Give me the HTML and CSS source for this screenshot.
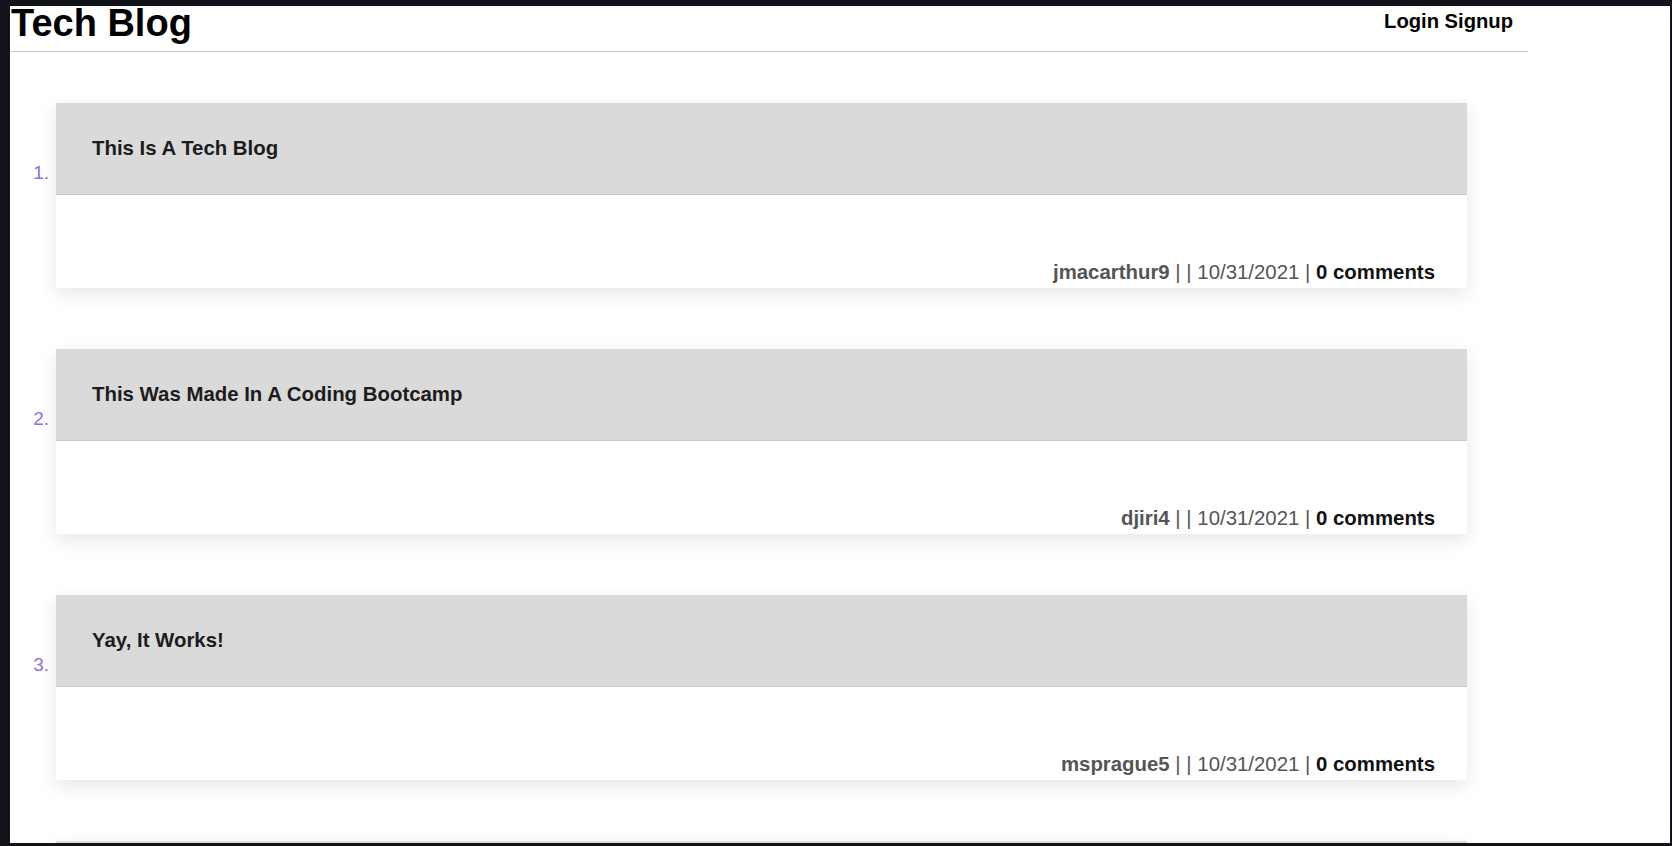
FILE: index.html
```html
<!DOCTYPE html>
<html lang="en">
<head>
<meta charset="utf-8">
<title>Tech Blog</title>
<link rel="stylesheet" href="styles.css">
</head>
<body>
<div class="page">
  <header class="site-header">
    <h1 class="brand">Tech Blog</h1>
    <nav class="nav"><a href="#">Login</a> <a href="#">Signup</a></nav>
  </header>
  <ol class="posts">
    <li class="post">
      <span class="num">1.</span>
      <article class="card">
        <div class="card-head"><h2 class="card-title">This Is A Tech Blog</h2></div>
        <div class="card-body">
          <p class="meta"><span class="author">jmacarthur9</span> | | <span class="date">10/31/2021</span> | <span class="comments">0 comments</span></p>
        </div>
      </article>
    </li>
    <li class="post">
      <span class="num">2.</span>
      <article class="card">
        <div class="card-head"><h2 class="card-title">This Was Made In A Coding Bootcamp</h2></div>
        <div class="card-body">
          <p class="meta"><span class="author">djiri4</span> | | <span class="date">10/31/2021</span> | <span class="comments">0 comments</span></p>
        </div>
      </article>
    </li>
    <li class="post">
      <span class="num">3.</span>
      <article class="card">
        <div class="card-head"><h2 class="card-title">Yay, It Works!</h2></div>
        <div class="card-body">
          <p class="meta"><span class="author">msprague5</span> | | <span class="date">10/31/2021</span> | <span class="comments">0 comments</span></p>
        </div>
      </article>
    </li>
    <li class="post">
      <span class="num num-empty"></span>
      <article class="card">
        <div class="card-head"></div>
        <div class="card-body"></div>
      </article>
    </li>
  </ol>
</div>
</body>
</html>
```
FILE: styles.css
```css
html, body {
  margin: 0;
  padding: 0;
  height: 100%;
}
body {
  background: #111318;
  font-family: "Liberation Sans", Arial, Helvetica, sans-serif;
  overflow: hidden;
}
.page {
  margin: 6px 2px 0 10px;
  height: 837px;
  background: #ffffff;
  overflow: hidden;
}
.site-header {
  width: 1518px;
  height: 45px;
  border-bottom: 1px solid #cbcbcb;
  display: flex;
  justify-content: space-between;
  align-items: flex-start;
}
.brand {
  margin: 0 0 0 1px;
  font-size: 38px;
  line-height: 34px;
  font-weight: bold;
  color: #000;
}
.nav {
  margin-top: 4px;
  padding-right: 15px;
  font-size: 20.2px;
  line-height: 23px;
  font-weight: bold;
}
.nav a {
  color: #000;
  text-decoration: none;
}
.posts {
  list-style: none;
  margin: 51px 0 0 0;
  padding: 0 0 0 23px;
  display: flex;
  flex-direction: column;
  gap: 61px;
}
.post {
  display: flex;
  align-items: flex-start;
}
.num {
  width: 16px;
  margin-right: 7px;
  margin-top: 60px;
  text-align: right;
  font-size: 19px;
  line-height: 20px;
  color: #9370db;
  white-space: nowrap;
}
.card {
  width: 1411px;
  background: #fff;
  box-shadow: 0 6px 18px rgba(0, 0, 0, 0.1);
}
.card-head {
  height: 91px;
  background: #dadada;
  border-bottom: 1px solid #c9c9c9;
  display: flex;
  align-items: center;
  padding-left: 36px;
}
.card-title {
  margin: 0;
  font-size: 20.4px;
  line-height: 23px;
  font-weight: bold;
  color: #1c1c1c;
}
.card-body {
  height: 93px;
  display: flex;
  justify-content: flex-end;
  align-items: flex-end;
  padding: 0 32px 4px 0;
  box-sizing: border-box;
}
.meta {
  margin: 0;
  font-size: 20.4px;
  line-height: 23px;
  color: #555;
  white-space: nowrap;
}
.author {
  font-weight: bold;
  color: #555;
}
.date {
  color: #555;
}
.comments {
  font-weight: bold;
  color: #111;
}
```
